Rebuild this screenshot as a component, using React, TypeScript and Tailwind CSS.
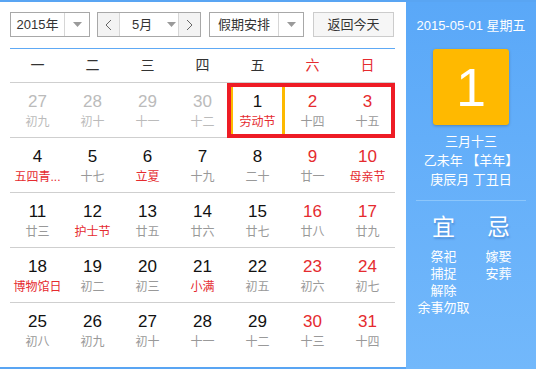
import React from "react";

type Day = {
  num: number;
  sub: string;
  other?: boolean;
  weekend?: boolean;
  fest?: boolean;
  active?: boolean;
};

const weeks: Day[][] = [
  [
    { num: 27, sub: "初九", other: true },
    { num: 28, sub: "初十", other: true },
    { num: 29, sub: "十一", other: true },
    { num: 30, sub: "十二", other: true },
    { num: 1, sub: "劳动节", fest: true, active: true },
    { num: 2, sub: "十四", weekend: true },
    { num: 3, sub: "十五", weekend: true },
  ],
  [
    { num: 4, sub: "五四青...", fest: true },
    { num: 5, sub: "十七" },
    { num: 6, sub: "立夏", fest: true },
    { num: 7, sub: "十九" },
    { num: 8, sub: "二十" },
    { num: 9, sub: "廿一", weekend: true },
    { num: 10, sub: "母亲节", weekend: true, fest: true },
  ],
  [
    { num: 11, sub: "廿三" },
    { num: 12, sub: "护士节", fest: true },
    { num: 13, sub: "廿五" },
    { num: 14, sub: "廿六" },
    { num: 15, sub: "廿七" },
    { num: 16, sub: "廿八", weekend: true },
    { num: 17, sub: "廿九", weekend: true },
  ],
  [
    { num: 18, sub: "博物馆日", fest: true },
    { num: 19, sub: "初二" },
    { num: 20, sub: "初三" },
    { num: 21, sub: "小满", fest: true },
    { num: 22, sub: "初五" },
    { num: 23, sub: "初六", weekend: true },
    { num: 24, sub: "初七", weekend: true },
  ],
  [
    { num: 25, sub: "初八" },
    { num: 26, sub: "初九" },
    { num: 27, sub: "初十" },
    { num: 28, sub: "十一" },
    { num: 29, sub: "十二" },
    { num: 30, sub: "十三", weekend: true },
    { num: 31, sub: "十四", weekend: true },
  ],
];

const weekdays = ["一", "二", "三", "四", "五", "六", "日"];

function Arrow() {
  return (
    <svg width="9" height="5" viewBox="0 0 9 5">
      <path d="M0 0 L9 0 L4.5 5 Z" fill="#9a9a9a" />
    </svg>
  );
}

function Chevron({ dir }: { dir: "left" | "right" }) {
  return (
    <svg width="7" height="12" viewBox="0 0 7 12">
      <polyline
        points={dir === "left" ? "6,1 1,6 6,11" : "1,1 6,6 1,11"}
        fill="none"
        stroke="#666"
        strokeWidth="1"
      />
    </svg>
  );
}

function Toolbar() {
  return (
    <div className="flex h-[25px] items-stretch text-[13px] text-[#333]">
      <div className="flex w-[80px] border border-[#a8a8a8] bg-white">
        <div className="flex flex-1 items-center justify-center">2015年</div>
        <div className="flex w-[25px] items-center justify-center border-l border-[#d6d6d6]">
          <Arrow />
        </div>
      </div>
      <div className="ml-[7px] flex w-[104px] border border-[#a8a8a8] bg-white">
        <div className="flex w-[22px] items-center justify-center border-r border-[#d6d6d6] bg-[#f3f3f3]">
          <Chevron dir="left" />
        </div>
        <div className="flex flex-1 items-center pl-[12px]">
          <span>5月</span>
          <span className="ml-[15px] flex">
            <Arrow />
          </span>
        </div>
        <div className="flex w-[22px] items-center justify-center border-l border-[#d6d6d6] bg-[#f3f3f3]">
          <Chevron dir="right" />
        </div>
      </div>
      <div className="ml-[8px] flex w-[95px] border border-[#a8a8a8] bg-white">
        <div className="flex flex-1 items-center justify-center">假期安排</div>
        <div className="flex w-[25px] items-center justify-center border-l border-[#d6d6d6]">
          <Arrow />
        </div>
      </div>
      <div className="ml-[9px] flex w-[81px] items-center justify-center border border-[#cccccc] bg-[#f6f6f6]">
        返回今天
      </div>
    </div>
  );
}

function Cell({ d }: { d: Day }) {
  const numColor = d.other ? "text-[#bbbbbb]" : d.weekend ? "text-[#e52b2f]" : "text-[#111]";
  const subColor = d.other ? "text-[#bbbbbb]" : d.fest ? "text-[#e52b2f]" : "text-[#999]";
  return (
    <div
      className={`flex w-[55px] flex-col items-center pt-[9px] ${
        d.active ? "border-x-[3px] border-[#fdb900]" : ""
      }`}
    >
      <div className={`h-[20px] text-[17px] leading-[20px] ${numColor}`}>{d.num}</div>
      <div className={`mt-[2px] whitespace-nowrap text-[12px] leading-[16px] ${subColor}`}>{d.sub}</div>
    </div>
  );
}

function Calendar() {
  return (
    <div className="relative mt-[11px] w-[385px] border-t border-[#5ea9f5]">
      <div className="flex h-[34px] border-b border-[#cfcfcf]">
        {weekdays.map((w, i) => (
          <div
            key={w}
            className={`flex w-[55px] items-center justify-center text-[14px] ${
              i >= 5 ? "text-[#e52b2f]" : "text-[#333]"
            }`}
          >
            {w}
          </div>
        ))}
      </div>
      {weeks.map((row, ri) => (
        <div
          key={ri}
          className={`flex ${ri < 4 ? "h-[55px] border-b border-[#cfcfcf]" : "h-[64px]"}`}
        >
          {row.map((d, ci) => (
            <Cell key={ci} d={d} />
          ))}
        </div>
      ))}
      <div className="pointer-events-none absolute left-[217px] top-[34px] h-[55px] w-[168px] border-[4px] border-[#ee1c25]" />
    </div>
  );
}

function SidePanel() {
  return (
    <div className="flex w-[130px] flex-col items-center border-t-2 border-[#59a5f3] bg-gradient-to-b from-[#5aa8f8] to-[#72b8fb] text-white">
      <div className="mt-[16px] text-[13px] leading-[16px]">2015-05-01 星期五</div>
      <div className="mt-[15px] flex h-[76px] w-[76px] items-center justify-center rounded-[3px] bg-[#ffb900] text-[54px] leading-none shadow-[0_1px_3px_rgba(0,0,0,0.25)]">
        1
      </div>
      <div className="mt-[7px] text-[13px] leading-[19px]">三月十三</div>
      <div className="text-[13px] leading-[19px]">乙未年 【羊年】</div>
      <div className="text-[13px] leading-[19px]">庚辰月 丁丑日</div>
      <div className="mt-[11px] h-px w-[110px] bg-[#8cc6fb]" />
      <div className="mt-[11px] grid w-[110px] grid-cols-2">
        <div className="flex flex-col items-center">
          <div className="text-[23px] leading-[30px] [text-shadow:1px_2px_2px_rgba(0,40,120,0.25)]">宜</div>
          <div className="mt-[6px] flex flex-col items-center text-[13px] leading-[17px]">
            <span>祭祀</span>
            <span>捕捉</span>
            <span>解除</span>
            <span className="whitespace-nowrap">余事勿取</span>
          </div>
        </div>
        <div className="flex flex-col items-center">
          <div className="text-[23px] leading-[30px] [text-shadow:1px_2px_2px_rgba(0,40,120,0.25)]">忌</div>
          <div className="mt-[6px] flex flex-col items-center text-[13px] leading-[17px]">
            <span>嫁娶</span>
            <span>安葬</span>
          </div>
        </div>
      </div>
    </div>
  );
}

export default function App() {
  return (
    <div
      className="flex h-[369px] w-[536px] overflow-hidden bg-white"
      style={{ fontFamily: '"Liberation Sans", "Noto Sans CJK SC", sans-serif' }}
    >
      <div className="flex w-[406px] flex-col border-y-2 border-[#59a5f3] pl-[10px] pt-[10px]">
        <Toolbar />
        <Calendar />
      </div>
      <SidePanel />
    </div>
  );
}
